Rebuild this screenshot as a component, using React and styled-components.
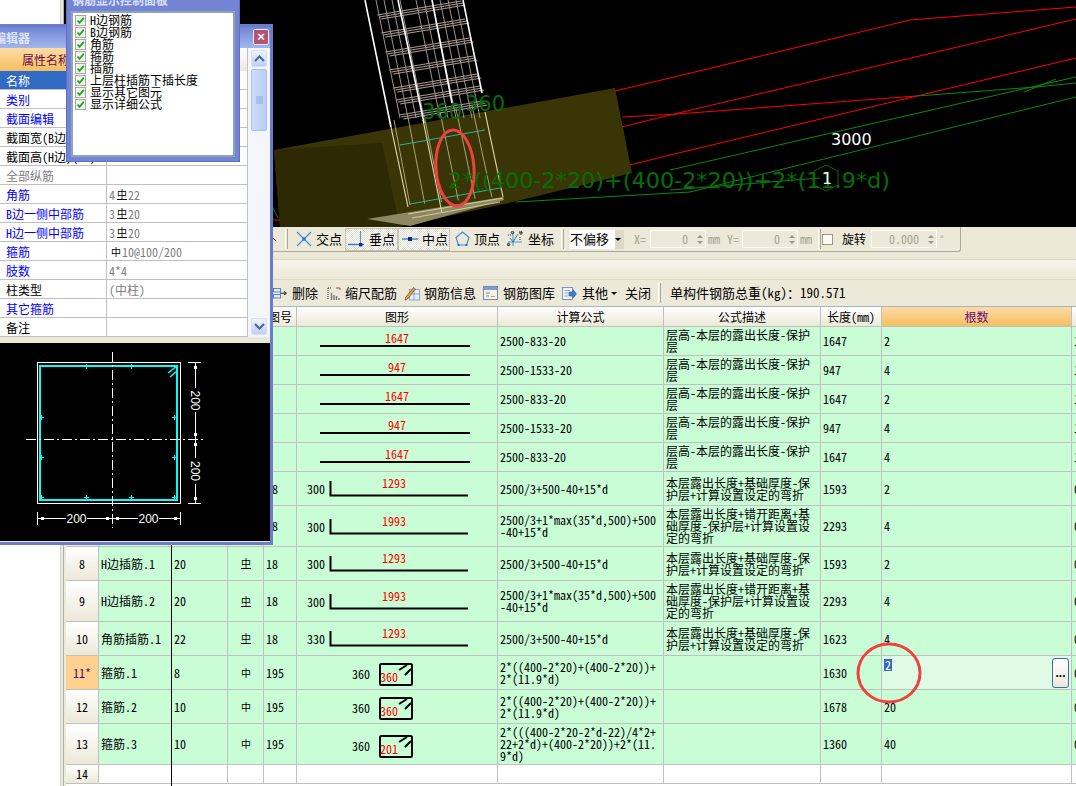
import React from 'react'
import styled, {createGlobalStyle} from 'styled-components'

const GlobalStyle = createGlobalStyle`
 html, body { margin:0; padding:0; background:#fff; overflow:hidden; }
`

const UI_FONT = `"Noto Sans Mono CJK SC","Noto Sans CJK SC","Liberation Mono",monospace`

const Page = styled.div`
 position:relative;
 display:flex;
 width:1076px;
 height:786px;
 overflow:hidden;
 font:12px/12px ${UI_FONT};
 color:#000;
`

const TreePane = styled.div`
 width:60px;
 background:#fff;
`

const Splitter = styled.div`
 width:2px;
 background:#ece9d8;
 border-left:1px solid #d8d4c4;
 border-right:1px solid #9fb0cc;
`

const Main = styled.div`
 width:1012px;
 display:flex;
 flex-direction:column;
 background:#ece9d8;
`

const Canvas = styled.svg`
 display:block;
 width:1012px;
 height:227px;
 background:#000;
 flex:none;
`

const ToolRow = styled.div`
 height:26px;
 flex:none;
 background:#ece9d8;
`

const ToolStrip = styled.div`
 display:flex;
 align-items:center;
 width:897px;
 height:25px;
 border-right:1px solid #aca899;
 border-bottom:1px solid #aca899;
 border-bottom-right-radius:3px;
 box-sizing:border-box;
`

const Stub = styled.div`
 width:221px;
 flex:none;
 display:flex;
 justify-content:flex-end;
 padding-right:8px;
 box-sizing:border-box;
`

const Grip = styled.div`
 width:3px;
 height:20px;
 margin:0 ${p => p.$right || 2}px 0 ${p => p.$left || 0}px;
 flex:none;
 border-left:1px solid #fff;
 border-right:1px solid #aca899;
 box-sizing:border-box;
`

const Tool = styled.div`
 display:flex;
 align-items:center;
 flex:none;
 gap:${p => p.$gap || 4}px;
 width:${p => p.$w}px;
 height:23px;
 padding-left:${p => p.$pad || 0}px;
 box-sizing:border-box;
 font-size:${p => p.$size || 13}px;
 ${p => p.$on && `
  background:repeating-conic-gradient(#fff 0 25%, #e4e1d2 0 50%) 0 0/2px 2px;
  box-shadow:inset 0 0 0 1px #c9c5b2;
 `}
`

const SelectBox = styled.div`
 display:flex;
 align-items:center;
 justify-content:space-between;
 width:55px;
 height:19px;
 flex:none;
 background:linear-gradient(90deg,#fff 0 46px,#ddd9c6 46px);
 padding:0 3px 0 1px;
 box-sizing:border-box;
 font-size:13px;
`

const Caret = styled.span`
 display:inline-block;
 width:0;
 height:0;
 margin-left:${p => p.$left || 0}px;
 border:3px solid transparent;
 border-top:3px solid #000;
 border-bottom:0;
`

const Muted = styled.span`
 color:#a5a294;
 flex:none;
 margin-left:${p => p.$left || 0}px;
 font-size:${p => p.$size || 12}px;
`

const Field = styled.div`
 display:flex;
 align-items:center;
 justify-content:flex-end;
 gap:9px;
 width:${p => p.$w}px;
 height:18px;
 margin-left:${p => p.$left || 0}px;
 flex:none;
 border:1px solid #fbfaf5;
 box-sizing:border-box;
 padding-right:2px;
 color:#a5a294;
`

const Spin = styled.div`
 display:flex;
 flex-direction:column;
 gap:3px;
 &::before, &::after {
  content:"";
  width:0;
  height:0;
  border:3px solid transparent;
 }
 &::before { border-bottom:3px solid #9a978a; border-top:0; }
 &::after { border-top:3px solid #9a978a; border-bottom:0; }
`

const CheckBox = styled.div`
 width:11px;
 height:11px;
 flex:none;
 background:#fbfaf3;
 border:1px solid #9b9985;
 box-sizing:border-box;
`

const Band = styled.div`
 flex:none;
 margin-top:6px;
 height:19px;
 background:linear-gradient(#f7f4ea,#ece9d8);
 border-top:1px solid #ddd8c2;
 border-bottom:1px solid #ddd8c2;
 box-sizing:content-box;
`

const ToolBar = styled.div`
 display:flex;
 align-items:center;
 height:26px;
 flex:none;
 padding-left:209px;
 border-bottom:1px solid #a3b4cf;
`

const BarItem = styled.div`
 display:flex;
 align-items:center;
 flex:none;
 gap:${p => p.$gap || 4}px;
 margin-right:${p => p.$right || 0}px;
 font-size:13px;
`

const Table = styled.div`
 position:relative;
 flex:1;
 margin-left:2px;
 background:#fff;
 overflow:hidden;
`

const Row = styled.div`
 display:grid;
 grid-template-columns:33px 73px 56px 36px 33px 201px 166px 157px 61px 190px 60px;
 height:${p => p.$h}px;
`

const Cell = styled.div`
 display:flex;
 align-items:${p => p.$top ? 'flex-start' : 'center'};
 justify-content:${p => p.$center ? 'center' : 'flex-start'};
 padding:${p => p.$top ? '3px' : '0'} ${p => p.$padR || 0}px 0 ${p => p.$center ? 0 : 2}px;
 min-width:0;
 overflow:hidden;
 box-sizing:border-box;
 border-right:1px solid #c0c0c0;
 border-bottom:1px solid #c0c0c0;
 background:${p => p.$bg || '#c9fdd6'};
 word-break:break-all;
`

const HeadCell = styled.div`
 display:flex;
 align-items:center;
 justify-content:center;
 box-sizing:border-box;
 border-right:1px solid #c0c0c0;
 border-bottom:1px solid #c0c0c0;
 background:${p => p.$on ? 'linear-gradient(#fcdca4,#f4bf60)' : 'linear-gradient(#fff,#ece9d8)'};
 color:${p => p.$on ? '#680a90' : '#000'};
`

const RowHead = styled(Cell)`
 padding:0;
 justify-content:center;
 background:${p => p.$on ? '#fed28e' : 'linear-gradient(#fff,#ece9d8)'};
 color:${p => p.$on ? '#4a0a70' : '#000'};
`

const Selected = styled.span`
 background:#316ac5;
 color:#fff;
 padding:0 1px;
`

const MoreButton = styled.button`
 position:absolute;
 right:2px;
 top:2px;
 width:17px;
 height:30px;
 padding:0;
 font:bold 12px/12px "Liberation Sans",sans-serif;
 color:#000;
 background:linear-gradient(#fff,#ece9d8);
 border:1px solid #3a6ea5;
 border-radius:3px;
`

const EditCell = styled(Cell)`
 position:relative;
 overflow:visible;
`

const Grade = styled.span`
 display:inline-block;
 margin:0 1px 0 2px;
 font-size:10px;
 line-height:10px;
 ${p => p.$bar && 'border-bottom:1px solid currentColor;'}
 color:#000;
`

const ColumnMark = styled.div`
 position:absolute;
 left:105px;
 top:0;
 bottom:0;
 width:1px;
 background:#000;
`

const Shape = styled.svg`
 display:block;
 width:200px;
 height:${p => p.$h}px;
 flex:none;
 font:12px ${UI_FONT};
`

const Window = styled.div`
 position:absolute;
 left:-4px;
 top:24px;
 width:277px;
 height:521px;
 box-sizing:border-box;
 border:3px solid #6d7bcb;
 background:#ece9d8;
 display:flex;
 flex-direction:column;
`

const Title = styled.div`
 position:relative;
 height:21px;
 flex:none;
 display:flex;
 align-items:center;
 background:linear-gradient(#6f86d6,#a2b6ec);
 color:#dfe6fb;
 font-weight:bold;
 text-indent:${p => p.$indent || 0}px;
 white-space:nowrap;
 overflow:hidden;
`

const CloseBtn = styled.div`
 position:absolute;
 right:1px;
 top:2px;
 width:16px;
 height:16px;
 background:#b2566f;
 border:1px solid #e8e8f4;
 border-radius:2px;
 box-sizing:border-box;
 color:#fff;
 font:bold 13px/14px "Liberation Sans",sans-serif;
 text-align:center;
 text-indent:0;
`

const PropWrap = styled.div`
 display:flex;
 height:289px;
 flex:none;
 margin-left:1px;
 background:#fff;
`

const PropTable = styled.div`
 width:248px;
 flex:none;
`

const PropRow = styled.div`
 display:grid;
 grid-template-columns:107px 141px;
 height:${p => p.$h || 19}px;
`

const PropName = styled.div`
 display:flex;
 align-items:center;
 padding:1px 0 0 6px;
 overflow:hidden;
 white-space:nowrap;
 box-sizing:border-box;
 border-right:1px solid #c0c0c0;
 border-bottom:1px solid #c0c0c0;
 color:${p => ({blue:'#0000ff', grey:'#808080', white:'#fff'}[p.$tone] || '#000')};
 background:${p => p.$sel ? '#316ac5' : '#fff'};
`

const PropValue = styled(PropName)`
 padding-left:2px;
 color:#808080;
 background:#fff;
`

const PropHead = styled.div`
 display:flex;
 align-items:center;
 padding-left:${p => p.$pad || 0}px;
 border-right:1px solid #c0c0c0;
 background:${p => p.$on ? 'linear-gradient(#fcdca4,#f4bf60)' : 'linear-gradient(#fff,#ece9d8)'};
 color:#680a50;
`

const ScrollBar = styled.div`
 width:22px;
 flex:none;
 display:flex;
 flex-direction:column;
 padding:2px 3px;
 box-sizing:border-box;
 background:#f4f6fb;
`

const ScrollBtn = styled.div`
 display:flex;
 align-items:center;
 justify-content:center;
 height:17px;
 flex:none;
 background:linear-gradient(#eef3fe,#bdd0f6);
 border:1px solid #d5e0f7;
 border-radius:2px;
 box-sizing:border-box;
 margin-top:${p => p.$auto ? 'auto' : 0};
`

const ScrollThumb = styled(ScrollBtn)`
 height:62px;
 margin-top:2px;
 background:linear-gradient(90deg,#cfdcf9,#b8cdf5);
 border-color:#a9c0ee;
`

const Preview = styled.svg`
 display:block;
 width:270px;
 height:198px;
 margin:6px 0 0 1px;
 flex:none;
 background:#000;
`

const Panel = styled.div`
 position:absolute;
 left:66px;
 top:-12px;
 width:174px;
 height:174px;
 box-sizing:border-box;
 border:1px solid #5f6dc4;
 background:#7484d4;
 display:flex;
 flex-direction:column;
 padding:0 4px 4px;
`

const PanelTitle = styled(Title)`
 background:none;
 padding-left:1px;
 color:#d8e0fb;
`

const PanelBody = styled.div`
 flex:1;
 margin-top:1px;
 padding:1px 2px;
 background:#fff;
 border:2px solid #8da5b5;
 box-sizing:border-box;
`

const CheckRow = styled.div`
 display:flex;
 align-items:center;
 gap:4px;
 height:12px;
 white-space:nowrap;
`

const Tick = styled.span`
 display:block;
 width:11px;
 height:11px;
 flex:none;
 border:1px solid #a8a898;
 box-sizing:border-box;
 background:#f3f3ec;
`

const TickMark = styled.svg`
 display:block;
 width:9px;
 height:9px;
`

const RedMark = styled.svg`
 position:absolute;
 left:855px;
 top:641px;
 width:70px;
 height:64px;
`

function TickBox() {
  return (
    <Tick>
      <TickMark viewBox="0 0 9 9">
        <path d="M1.5 4.5 L3.5 6.8 L7.8 1.8" fill="none" stroke="#17a72e" strokeWidth="1.8"/>
      </TickMark>
    </Tick>
  )
}

function IconCross() {
  return (
    <svg width="16" height="16" viewBox="0 0 16 16">
      <path d="M1 1 L15 15 M15 1 L1 15" stroke="#3f8fd8" strokeWidth="1.2"/>
      <rect x="6.5" y="6.5" width="3" height="3" fill="#2a6cc4"/>
    </svg>
  )
}

function IconPerp() {
  return (
    <svg width="20" height="16" viewBox="-3 0 20 16">
      <path d="M0 13.5 H16" stroke="#2d78c8" strokeWidth="1.4"/>
      <path d="M12.5 0 V13" stroke="#6a93c4" strokeWidth="1.2"/>
      <rect x="11" y="12" width="3.4" height="3.4" fill="#12288c"/>
    </svg>
  )
}

function IconMid() {
  return (
    <svg width="20" height="12" viewBox="-4 0 20 12">
      <path d="M0 6 H16" stroke="#3a7fc9" strokeWidth="1.4"/>
      <rect x="6" y="4" width="4" height="4" fill="#12288c"/>
    </svg>
  )
}

function IconVertex() {
  return (
    <svg width="15" height="16" viewBox="0 0 15 16">
      <path d="M7.5 1 L14 6.5 L11.5 14 H3.5 L1 6.5 Z" fill="none" stroke="#3f8fd8" strokeWidth="1.2"/>
      <rect x="2.5" y="13" width="2" height="2" fill="#2a6cc4"/>
      <rect x="10.5" y="13" width="2" height="2" fill="#2a6cc4"/>
    </svg>
  )
}

function IconCoord() {
  return (
    <svg width="16" height="16" viewBox="0 0 16 16">
      <path d="M6 1 V15 M1 11 H15" stroke="#3f8fd8" strokeWidth="1"/>
      <path d="M3 7 L6 11 L11 3" stroke="#4a6f9e" strokeWidth="1" fill="none"/>
      <path d="M1 4 H4 M12 1 H15 M13 6 V9 M1 14 H3" stroke="#222" strokeWidth="1" strokeDasharray="1 1"/>
      <circle cx="1.5" cy="13.5" r="1.2" fill="none" stroke="#223"/>
      <circle cx="5.5" cy="1.5" r="1.2" fill="none" stroke="#223"/>
      <circle cx="14" cy="2" r="1.2" fill="none" stroke="#223"/>
    </svg>
  )
}

function IconDelete() {
  return (
    <svg width="15" height="13" viewBox="0 0 15 13">
      <rect x="0.5" y="1.5" width="7" height="3.5" fill="#dfe8f8" stroke="#5f85c0"/>
      <rect x="0.5" y="7.5" width="7" height="3.5" fill="#dfe8f8" stroke="#5f85c0"/>
      <path d="M7 6.2 H13 M11 4.5 L13.5 6.2 L11 8" stroke="#222" fill="none"/>
    </svg>
  )
}

function IconScale() {
  return (
    <svg width="14" height="15" viewBox="0 0 14 15">
      <path d="M1 2 V14 M1 2 H5" stroke="#333" strokeDasharray="1 1"/>
      <path d="M9 2 H13 M13 2 V4" stroke="#c04040"/>
      <path d="M4.5 14 V7 M7 14 V9 M9.5 14 V10 M12 14 V12" stroke="#777" strokeWidth="1.4"/>
    </svg>
  )
}

function IconInfo() {
  return (
    <svg width="16" height="16" viewBox="0 0 16 16">
      <rect x="5.5" y="4.5" width="10" height="10.5" fill="#e3ecfa" stroke="#8ea6cc"/>
      <path d="M5.5 9 H15 M10 4.5 V15" stroke="#8ea6cc"/>
      <path d="M1.5 12.5 L9.5 2.5 L11.5 4 L3.5 14 L1 15 Z" fill="#e0a838" stroke="#6d5a30" strokeWidth="0.8"/>
    </svg>
  )
}

function IconLib() {
  return (
    <svg width="15" height="14" viewBox="0 0 15 14">
      <rect x="0.5" y="0.5" width="14" height="13" fill="#f6f4ea" stroke="#6f8ab8"/>
      <rect x="1" y="1" width="13" height="3" fill="#7f9ed0"/>
      <path d="M3 7 H7 M3 10 H6" stroke="#888"/>
      <path d="M8 10.5 H12" stroke="#d89a3c"/>
    </svg>
  )
}

function IconOther() {
  return (
    <svg width="15" height="15" viewBox="0 0 15 15">
      <rect x="0.5" y="1.5" width="10" height="12" fill="#eef2fb" stroke="#7f95bb"/>
      <path d="M2.5 4.5 H8 M2.5 7 H6 M2.5 10 H6" stroke="#9aa8c4"/>
      <path d="M7 6 H11 V3.5 L14.5 8 L11 12 V10 H7 Z" fill="#3f7fd0" stroke="#2a5a9e" strokeWidth="0.6"/>
    </svg>
  )
}

function Chevron({down}) {
  return (
    <svg width="11" height="7" viewBox="0 0 11 7">
      <path d={down ? 'M1 1 L5.5 5.5 L10 1' : 'M1 6 L5.5 1.5 L10 6'} fill="none" stroke="#4a6590" strokeWidth="2"/>
    </svg>
  )
}

const STIRRUPS = [15, 33, 52, 70, 88, 100, 115]
const UPPER_BARS = [0, 8, 16, 24, 40, 48, 56, 64, 72, 80]

function ModelDrawing() {
  return (
    <Canvas viewBox="64 0 1012 227">
      <path d="M274 150 L615 88 L632 173 L513 202 L397 227 L280 227 Z" fill="#3a3506"/>
      <path d="M274 150 L382 143 L400 227 L280 227 Z" fill="#2c2904"/>
      <path d="M367 219 L503 197 L504 200 L410 226 Z" fill="#8e8862"/>
      {[0, 14, 30, 46, 62, 78].map(d => (
        <line key={d} x1={394 + d} y1={120 - d * 0.18} x2={410 + d * 1.05} y2={205 - d * 0.1} stroke="#a9a377" strokeWidth="1"/>
      ))}
      <path d="M391 127 L408 207 M423 120 L442 213 M485 112 L503 197" stroke="#d8d3a8" strokeWidth="1.2"/>
      <path d="M400 145 L485 130 M410 204 L500 188" stroke="#2fb08a" strokeWidth="1.2"/>
      <path d="M408 214 L503 198 M412 218 L500 202" stroke="#cfc99b" strokeWidth="1.2"/>
      {UPPER_BARS.map(d => (
        <line key={d} x1={376 + d} y1="0" x2={400 + d} y2="118" stroke="#a0948c" strokeWidth="1"/>
      ))}
      {STIRRUPS.map(y => (
        <g key={y} stroke="#a89a92" strokeWidth="1.2">
          <line x1={374 + y * 0.22} y1={y} x2={458 + y * 0.22} y2={y - 14}/>
          <line x1={376 + y * 0.22} y1={y + 2} x2={460 + y * 0.22} y2={y - 12}/>
          <line x1={378 + y * 0.22} y1={y + 4} x2={462 + y * 0.22} y2={y - 10}/>
        </g>
      ))}
      <path d="M365 0 L391 127 M398 0 L424 123 M432 0 L452 103 M463 0 L482 93" stroke="#fff" strokeWidth="1.6"/>
      <path d="M615 91 L670 78 L910 20 L1076 7" stroke="#f00" fill="none"/>
      <path d="M622 127 L670 115 L1076 19" stroke="#f00" fill="none"/>
      <path d="M622 117 L670 114.5 L917 96" stroke="#f00" fill="none"/>
      <path d="M630 165 L670 155 L1076 58" stroke="#f00" fill="none"/>
      <path d="M917 96 L1036 87 L1076 83" stroke="#0a8a0a" fill="none"/>
      <path d="M670 170 L1036 86 L1076 77" stroke="#0a8a0a" fill="none"/>
      <path d="M516 202 L690 192 L1076 97" stroke="#0a8a0a" fill="none"/>
      <path d="M670 190 L820 178 M1024 92 L1056 79" stroke="#0a8a0a" fill="none"/>
      <path d="M272 206 L278 218" stroke="#0a8a0a" fill="none"/>
      <path d="M272 220 H280" stroke="#f00" fill="none"/>
      <path d="M826 165 L838 171 L838 185 L826 191 L814 185 L814 171 Z" fill="none" stroke="#0a6a0a"/>
      <ellipse cx="455" cy="168" rx="19" ry="38" transform="rotate(-4 455 168)" fill="none" stroke="#f04040" strokeWidth="3"/>
      <g fontFamily='"DejaVu Sans",sans-serif' fill="#056f05">
        <text x="422" y="119" fontSize="21">360</text>
        <text x="465" y="111" fontSize="21">360</text>
        <text x="448" y="188" fontSize="22" textLength="442" lengthAdjust="spacingAndGlyphs">2*((400-2*20)+(400-2*20))+2*(11.9*d)</text>
      </g>
      <g fontFamily='"DejaVu Sans",sans-serif' fill="#fff">
        <text x="831" y="145" fontSize="16">3000</text>
        <text x="822" y="184" fontSize="16">1</text>
      </g>
    </Canvas>
  )
}

const SECTION_TICKS = [[86, 366], [131, 366], [41, 417], [41, 457], [174, 417], [174, 457], [41, 497], [86, 497], [131, 497], [174, 497]]
const DIM_SQUARES = [[195, 367], [195, 434], [195, 444], [195, 498], [42, 518], [107, 518], [117, 518], [175, 518]]

function SectionDrawing() {
  return (
    <Preview viewBox="0 343 270 198">
      <rect x="37.5" y="362.5" width="143" height="141" fill="none" stroke="#fff"/>
      <rect x="40" y="366" width="137" height="134" fill="none" stroke="#00ffff" strokeWidth="2"/>
      <path d="M168 373 L177 366 M170 377 L177 371" stroke="#00ffff" strokeWidth="1.5"/>
      {SECTION_TICKS.map(([x, y]) => (
        <path key={x + '-' + y} d={`M${x - 2} ${y + .5} H${x + 3} M${x + .5} ${y - 2} V${y + 3}`} stroke="#00ffff"/>
      ))}
      <path d="M112.5 352 V528 M26 439.5 H203" stroke="#fff" strokeDasharray="10 3 2 3"/>
      <path d="M188 362.5 H201 M188 503.5 H201 M195.5 362 V388 M195.5 412 V458 M195.5 484 V503" stroke="#fff"/>
      <path d="M37.5 512 V525 M180.5 512 V525 M38 518.5 H66 M87 518.5 H138 M159 518.5 H180" stroke="#fff"/>
      {DIM_SQUARES.map(([x, y]) => <rect key={x + '-' + y} x={x - 1} y={y - 1} width="3" height="3" fill="#fff"/>)}
      <g fill="#fff" fontFamily='"Liberation Sans",sans-serif' fontSize="12" textAnchor="middle">
        <text x="76.5" y="523">200</text>
        <text x="148.5" y="523">200</text>
        <text transform="translate(191 400.5) rotate(90)">200</text>
        <text transform="translate(191 471) rotate(90)">200</text>
      </g>
    </Preview>
  )
}

function StraightShape({label}) {
  return (
    <Shape $h={28} viewBox="0 0 200 28">
      <path d="M23 19 H173" stroke="#000" strokeWidth="2"/>
      <text x="100" y="16" fill="#f00" textAnchor="middle">{label}</text>
    </Shape>
  )
}

function BentShape({label, leg}) {
  return (
    <Shape $h={33} viewBox="0 0 200 33">
      <text x="10" y="22" fill="#000">{leg}</text>
      <path d="M33.5 9 V23.5 H171" fill="none" stroke="#000" strokeWidth="2"/>
      <text x="97" y="16" fill="#f00" textAnchor="middle">{label}</text>
    </Shape>
  )
}

function HoopShape({label}) {
  return (
    <Shape $h={33} viewBox="0 0 200 33">
      <text x="55" y="23" fill="#000">360</text>
      <rect x="83" y="8" width="32" height="21" rx="1.5" fill="none" stroke="#000" strokeWidth="2"/>
      <path d="M102 14 L110 9 M108 19 L114 13" stroke="#000" strokeWidth="2"/>
      <text x="83" y="26" fill="#f00">{label}</text>
    </Shape>
  )
}

const ROWS = [
  {no: '1', h: 29, fig: '1', shape: <StraightShape label="1647"/>, formula: '2500-833-20', desc: '层高-本层的露出长度-保护层', len: '1647', count: '2', next: '1'},
  {no: '2', h: 29, fig: '1', shape: <StraightShape label="947"/>, formula: '2500-1533-20', desc: '层高-本层的露出长度-保护层', len: '947', count: '4', next: '1'},
  {no: '3', h: 29, fig: '1', shape: <StraightShape label="1647"/>, formula: '2500-833-20', desc: '层高-本层的露出长度-保护层', len: '1647', count: '2', next: '1'},
  {no: '4', h: 29, fig: '1', shape: <StraightShape label="947"/>, formula: '2500-1533-20', desc: '层高-本层的露出长度-保护层', len: '947', count: '4', next: '1'},
  {no: '5', h: 29, fig: '1', shape: <StraightShape label="1647"/>, formula: '2500-833-20', desc: '层高-本层的露出长度-保护层', len: '1647', count: '4', next: '1'},
  {no: '6', h: 34, fig: '18', shape: <BentShape label="1293" leg="300"/>, formula: '2500/3+500-40+15*d', desc: '本层露出长度+基础厚度-保护层+计算设置设定的弯折', len: '1593', count: '2', next: '0'},
  {no: '7', h: 41, fig: '18', shape: <BentShape label="1993" leg="300"/>, formula: '2500/3+1*max(35*d,500)+500-40+15*d', desc: '本层露出长度+错开距离+基础厚度-保护层+计算设置设定的弯折', len: '2293', count: '4', next: '0'},
  {no: '8', h: 34, name: 'H边插筋.1', dia: '20', bar: true, fig: '18', shape: <BentShape label="1293" leg="300"/>, formula: '2500/3+500-40+15*d', desc: '本层露出长度+基础厚度-保护层+计算设置设定的弯折', len: '1593', count: '2', next: '0'},
  {no: '9', h: 41, name: 'H边插筋.2', dia: '20', bar: true, fig: '18', shape: <BentShape label="1993" leg="300"/>, formula: '2500/3+1*max(35*d,500)+500-40+15*d', desc: '本层露出长度+错开距离+基础厚度-保护层+计算设置设定的弯折', len: '2293', count: '4', next: '0'},
  {no: '10', h: 34, name: '角筋插筋.1', dia: '22', bar: true, fig: '18', shape: <BentShape label="1293" leg="330"/>, formula: '2500/3+500-40+15*d', desc: '本层露出长度+基础厚度-保护层+计算设置设定的弯折', len: '1623', count: '4', next: '0'},
  {no: '11*', h: 34, name: '箍筋.1', dia: '8', fig: '195', shape: <HoopShape label="360"/>, formula: '2*((400-2*20)+(400-2*20))+2*(11.9*d)', desc: '', len: '1630', count: '2', next: '0', active: true},
  {no: '12', h: 34, name: '箍筋.2', dia: '10', fig: '195', shape: <HoopShape label="360"/>, formula: '2*((400-2*20)+(400-2*20))+2*(11.9*d)', desc: '', len: '1678', count: '20', next: '0'},
  {no: '13', h: 41, name: '箍筋.3', dia: '10', fig: '195', shape: <HoopShape label="201"/>, formula: '2*(((400-2*20-2*d-22)/4*2+22+2*d)+(400-2*20))+2*(11.9*d)', desc: '', len: '1360', count: '40', next: '0'},
]

const HEADERS = ['筋号', '直径(mm)', '级别', '图号', '图形', '计算公式', '公式描述', '长度(mm)', '根数', '搭接']

const PROPS = [
  {name: '类别', tone: 'blue'},
  {name: '截面编辑', tone: 'blue'},
  {name: '截面宽(B边)(mm)'},
  {name: '截面高(H边)(mm)'},
  {name: '全部纵筋', tone: 'grey'},
  {name: '角筋', tone: 'blue', value: <>4<Grade $bar>中</Grade>22</>},
  {name: 'B边一侧中部筋', tone: 'blue', value: <>3<Grade $bar>中</Grade>20</>},
  {name: 'H边一侧中部筋', tone: 'blue', value: <>3<Grade $bar>中</Grade>20</>},
  {name: '箍筋', tone: 'blue', value: <><Grade>中</Grade>10@100/200</>},
  {name: '肢数', tone: 'blue', value: '4*4'},
  {name: '柱类型', value: '(中柱)'},
  {name: '其它箍筋', tone: 'blue'},
  {name: '备注'},
]

const CHECKS = ['H边钢筋', 'B边钢筋', '角筋', '箍筋', '插筋', '上层柱插筋下插长度', '显示其它图元', '显示详细公式']

function App() {
  return (
    <Page>
      <GlobalStyle/>
      <TreePane/>
      <Splitter/>
      <Main>
        <ModelDrawing/>
        <ToolRow>
          <ToolStrip>
            <Stub>
              <svg width="6" height="6" viewBox="0 0 6 6"><path d="M0 0 L5 5" stroke="#222"/></svg>
            </Stub>
            <Grip $right={4}/>
            <Tool $w={53} $pad={4}><IconCross/>交点</Tool>
            <Tool $w={53} $on><IconPerp/>垂点</Tool>
            <Tool $w={52} $on><IconMid/>中点</Tool>
            <Tool $w={53} $pad={5}><IconVertex/>顶点</Tool>
            <Tool $w={58} $pad={4} $gap={5}><IconCoord/>坐标</Tool>
            <Grip $right={5}/>
            <SelectBox>不偏移<Caret/></SelectBox>
            <Muted $left={10}>X=</Muted>
            <Field $w={56} $left={4}>0<Spin/></Field>
            <Muted $left={2}>mm</Muted>
            <Muted $left={7}>Y=</Muted>
            <Field $w={56} $left={3}>0<Spin/></Field>
            <Muted $left={2}>mm</Muted>
            <Grip $left={6} $right={1}/>
            <CheckBox/>
            <Tool $w={33} $pad={9} $size={12}>旋转</Tool>
            <Field $w={66} $left={5}>0.000<Spin/></Field>
            <Muted $left={3} $size={10}>°</Muted>
          </ToolStrip>
        </ToolRow>
        <Band/>
        <ToolBar>
          <BarItem $right={9}><IconDelete/>删除</BarItem>
          <BarItem $right={7} $gap={4}><IconScale/>缩尺配筋</BarItem>
          <BarItem $right={7}><IconInfo/>钢筋信息</BarItem>
          <BarItem $right={7} $gap={5}><IconLib/>钢筋图库</BarItem>
          <BarItem $right={8} $gap={5}><IconOther/>其他<Caret $left={-2}/></BarItem>
          <BarItem $right={7}>关闭</BarItem>
          <Grip $right={9}/>
          <BarItem>单构件钢筋总重(kg)：190.571</BarItem>
        </ToolBar>
        <Table>
          <Row $h={20}>
            <HeadCell/>
            {HEADERS.map(h => <HeadCell key={h} $on={h === '根数'}>{h}</HeadCell>)}
          </Row>
          {ROWS.map(r => (
            <Row key={r.no} $h={r.h}>
              <RowHead $on={r.active}>{r.no}</RowHead>
              <Cell>{r.name}</Cell>
              <Cell>{r.dia}</Cell>
              <Cell $center><Grade $bar={r.bar}>中</Grade></Cell>
              <Cell>{r.fig}</Cell>
              <Cell $center>{r.shape}</Cell>
              <Cell $padR={6}><span>{r.formula}</span></Cell>
              <Cell $padR={4}><span>{r.desc}</span></Cell>
              <Cell>{r.len}</Cell>
              {r.active ? (
                <EditCell $top $bg="#e0fbe5">
                  <Selected>{r.count}</Selected>
                  <MoreButton>...</MoreButton>
                </EditCell>
              ) : (
                <Cell>{r.count}</Cell>
              )}
              <Cell>{r.next}</Cell>
            </Row>
          ))}
          <Row $h={19}>
            <RowHead>14</RowHead>
            {HEADERS.map(h => <Cell key={h} $bg="#fff"/>)}
          </Row>
          <ColumnMark/>
        </Table>
      </Main>

      <Window>
        <Title $indent={-29}>
          属性编辑器
          <CloseBtn>×</CloseBtn>
        </Title>
        <PropWrap>
          <PropTable>
            <PropRow $h={23}>
              <PropHead $on $pad={22}>属性名称</PropHead>
              <PropHead/>
            </PropRow>
            <PropRow>
              <PropName $tone="white" $sel>名称</PropName>
              <PropValue/>
            </PropRow>
            {PROPS.map(p => (
              <PropRow key={p.name}>
                <PropName $tone={p.tone}>{p.name}</PropName>
                <PropValue>{p.value}</PropValue>
              </PropRow>
            ))}
          </PropTable>
          <ScrollBar>
            <ScrollBtn><Chevron/></ScrollBtn>
            <ScrollThumb>
              <svg width="7" height="9" viewBox="0 0 7 9"><path d="M0 1 H7 M0 3 H7 M0 5 H7 M0 7 H7" stroke="#8aa8e8"/></svg>
            </ScrollThumb>
            <ScrollBtn $auto><Chevron down/></ScrollBtn>
          </ScrollBar>
        </PropWrap>
        <SectionDrawing/>
      </Window>

      <Panel>
        <PanelTitle>钢筋显示控制面板</PanelTitle>
        <PanelBody>
          {CHECKS.map(c => <CheckRow key={c}><TickBox/>{c}</CheckRow>)}
        </PanelBody>
      </Panel>

      <RedMark viewBox="0 0 70 64">
        <ellipse cx="34" cy="32" rx="31" ry="29" fill="none" stroke="#f24040" strokeWidth="3"/>
      </RedMark>
    </Page>
  )
}

export default App
